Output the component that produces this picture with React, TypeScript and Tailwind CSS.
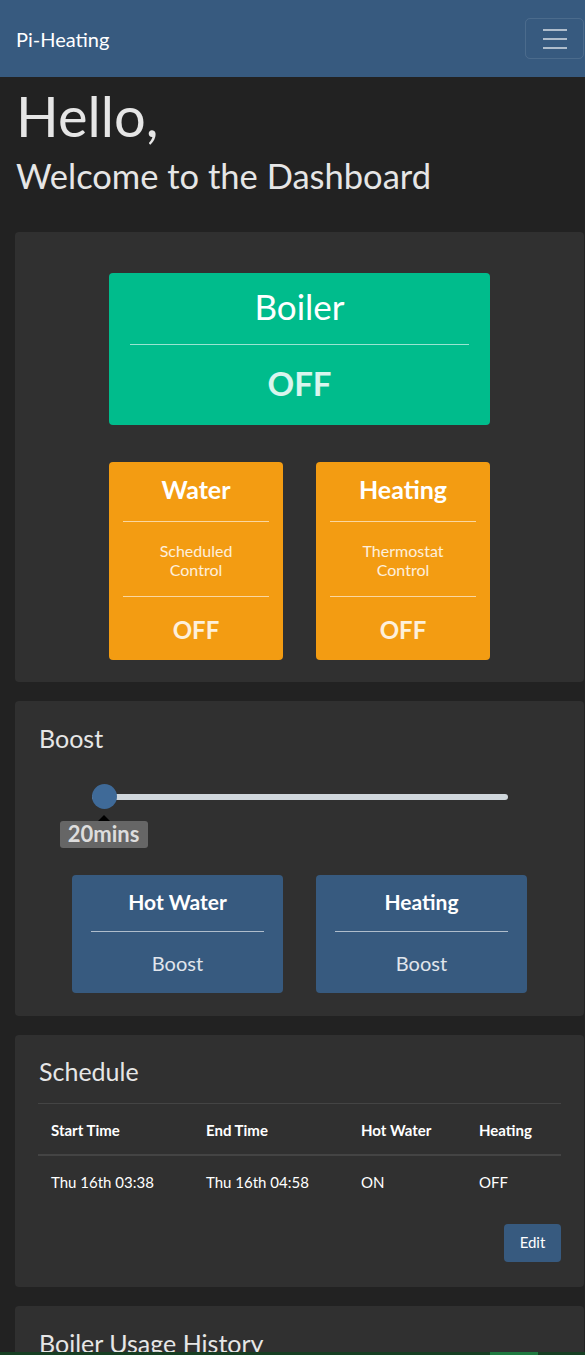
import React from 'react';

const FONT = { fontFamily: 'Lato, "Open Sans", "Liberation Sans", sans-serif' };

function Rule({ className = '' }: { className?: string }) {
  return <div className={`h-px bg-white/60 ${className}`} />;
}

function StatusBox({ title, note }: { title: string; note: string[] }) {
  return (
    <div className="flex flex-col rounded-[4px] bg-[#f39c12] px-[14px] pt-[12px] pb-[16px] text-center">
      <div className="text-[25px] font-bold leading-[30px] text-white">{title}</div>
      <Rule className="mt-[17px] mb-[19px]" />
      <div className="text-[16px] leading-[19px] text-white/85">
        {note.map((n) => (
          <div key={n}>{n}</div>
        ))}
      </div>
      <Rule className="mt-[17px] mb-[18px]" />
      <div className="text-[24px] font-bold leading-[29px] text-white/85">OFF</div>
    </div>
  );
}

function BoostButton({ title }: { title: string }) {
  return (
    <div className="flex flex-col rounded-[4px] bg-[#375a7f] px-[19px] pt-[14px] pb-[18px] text-center">
      <div className="text-[21px] font-bold leading-[25px] text-white">{title}</div>
      <Rule className="mt-[17px] mb-[19px]" />
      <div className="text-[20px] leading-[24px] text-white/85">Boost</div>
    </div>
  );
}

const schedule = [
  { start: 'Thu 16th 03:38', end: 'Thu 16th 04:58', water: 'ON', heating: 'OFF' },
];

export default function App() {
  return (
    <div className="relative h-[1355px] overflow-hidden bg-[#222222] text-white" style={FONT}>
      {/* Navbar */}
      <nav className="flex h-[77px] items-center justify-between bg-[#375a7f] pl-[16px] pr-px">
        <span className="text-[20px] leading-none text-white">Pi-Heating</span>
        <button className="flex h-[41px] w-[59px] flex-col items-center justify-center gap-[7px] rounded-[5px] border border-white/10">
          <span className="h-[2px] w-[24px] bg-white/60" />
          <span className="h-[2px] w-[24px] bg-white/60" />
          <span className="h-[2px] w-[24px] bg-white/60" />
        </button>
      </nav>

      <main className="pl-[15px] pr-px pt-[5px]">
        <h1 className="pl-px text-[56px] font-normal leading-[1.2] text-[#e6e6e6]">Hello,</h1>
        <h2 className="mt-[6px] pl-px text-[34.5px] leading-[1.2] text-[#e6e6e6]">Welcome to the Dashboard</h2>

        <div className="mt-[35px] flex flex-col gap-[19px]">
          {/* Status */}
          <section className="rounded-[4px] bg-[#303030] pt-[41px] pb-[22px]">
            <div className="mx-auto flex w-[381px] flex-col gap-[37px]">
              <div className="flex flex-col rounded-[4px] bg-[#00bc8c] px-[21px] pt-[12px] pb-[22px] text-center">
                <div className="text-[35px] leading-[42px] text-white">Boiler</div>
                <Rule className="mt-[17px] mb-[18px]" />
                <div className="text-[33px] font-bold leading-[40px] text-white/85">OFF</div>
              </div>
              <div className="grid grid-cols-2 gap-[33px]">
                <StatusBox title="Water" note={['Scheduled', 'Control']} />
                <StatusBox title="Heating" note={['Thermostat', 'Control']} />
              </div>
            </div>
          </section>

          {/* Boost */}
          <section className="rounded-[4px] bg-[#303030] px-[23px] pt-[22px] pb-[23px]">
            <h3 className="pl-px text-[25px] leading-[30px] text-[#e6e6e6]">Boost</h3>
            <div className="relative mx-auto mt-[31px] h-[91px] w-[416px]">
              <div className="absolute left-0 right-0 top-[10px] h-[6px] rounded-full bg-[#d0d7dc]" />
              <div className="absolute left-0 top-0 h-[25px] w-[25px] rounded-full bg-[#3f6a98]" />
              <div className="absolute left-[6px] top-[31px] h-0 w-0 border-x-[6px] border-b-[6px] border-x-transparent border-b-black" />
              <div className="absolute left-[-32px] top-[37px] flex h-[27px] w-[88px] items-center justify-center rounded-[3px] bg-[#666666] text-[22px] font-bold leading-none text-[#dddddd]">
                20mins
              </div>
            </div>
            <div className="mx-auto grid w-[455px] grid-cols-2 gap-[33px]">
              <BoostButton title="Hot Water" />
              <BoostButton title="Heating" />
            </div>
          </section>

          {/* Schedule */}
          <section className="rounded-[4px] bg-[#303030] px-[23px] pt-[21px] pb-[25px]">
            <h3 className="pl-px text-[25px] leading-[30px] text-[#e6e6e6]">Schedule</h3>
            <table className="mt-[17px] w-full table-fixed border-collapse text-left text-[15px] text-white">
              <colgroup>
                <col className="w-[155px]" />
                <col className="w-[155px]" />
                <col className="w-[118px]" />
                <col />
              </colgroup>
              <thead>
                <tr className="border-t border-[#444444]">
                  <th className="border-b-2 border-[#444444] px-[13px] pt-[14px] pb-[12px] font-bold leading-[24px]">Start Time</th>
                  <th className="border-b-2 border-[#444444] px-[13px] pt-[14px] pb-[12px] font-bold leading-[24px]">End Time</th>
                  <th className="border-b-2 border-[#444444] px-[13px] pt-[14px] pb-[12px] font-bold leading-[24px]">Hot Water</th>
                  <th className="border-b-2 border-[#444444] px-[13px] pt-[14px] pb-[12px] font-bold leading-[24px]">Heating</th>
                </tr>
              </thead>
              <tbody>
                {schedule.map((row) => (
                  <tr key={row.start}>
                    <td className="px-[13px] pt-[14px] pb-[12px] leading-[24px]">{row.start}</td>
                    <td className="px-[13px] pt-[14px] pb-[12px] leading-[24px]">{row.end}</td>
                    <td className="px-[13px] pt-[14px] pb-[12px] leading-[24px]">{row.water}</td>
                    <td className="px-[13px] pt-[14px] pb-[12px] leading-[24px]">{row.heating}</td>
                  </tr>
                ))}
              </tbody>
            </table>
            <div className="mt-[18px] flex justify-end">
              <button className="flex h-[38px] w-[57px] items-center justify-center rounded-[4px] bg-[#375a7f] text-[15px] text-white">
                Edit
              </button>
            </div>
          </section>

          {/* Usage history */}
          <section className="h-[200px] rounded-[4px] bg-[#303030] px-[23px] pt-[22px]">
            <h3 className="pl-px text-[25px] leading-[30px] text-[#e6e6e6]">Boiler Usage History</h3>
          </section>
        </div>
      </main>

      {/* bottom edge of the fixed bar */}
      <div className="absolute bottom-0 left-0 right-0 flex h-[3px] bg-[#173f23]">
        <div className="ml-[490px] h-full w-[48px] bg-[#1f7a40]" />
      </div>
    </div>
  );
}
